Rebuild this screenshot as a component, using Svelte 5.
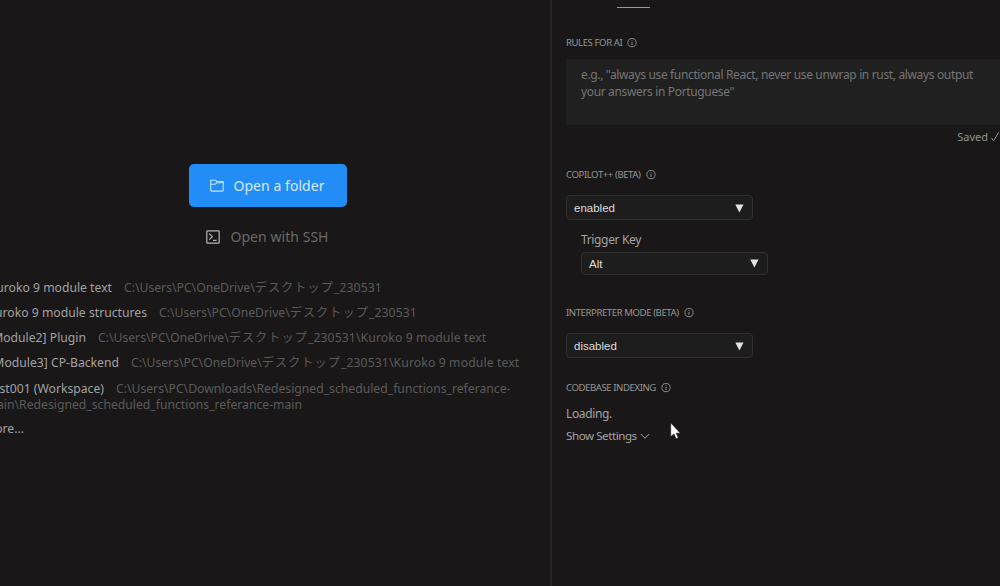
<script>
  const base = 'C:\\Users\\PC\\OneDrive\\';
  const recents = [
    { name: 'Kuroko 9 module text', width: 112, path: base, folder: 'デスクトップ', rest: '_230531' },
    { name: 'Kuroko 9 module structures', width: 147, path: base, folder: 'デスクトップ', rest: '_230531' },
    { name: '[Module2] Plugin', width: 86, path: base, folder: 'デスクトップ', rest: '_230531\\Kuroko 9 module text' },
    { name: '[Module3] CP-Backend', width: 119, path: base, folder: 'デスクトップ', rest: '_230531\\Kuroko 9 module text' },
    { name: 'test001 (Workspace)', width: 104, path: 'C:\\Users\\PC\\Downloads\\Redesigned_scheduled_functions_referance-', folder: '', rest: '' }
  ];
</script>

{#snippet heading(text)}
  <h2>
    <span>{text}</span>
    <svg width="10" height="10" viewBox="0 0 10 10" fill="none" stroke="currentColor">
      <circle cx="5" cy="4.6" r="4.1" stroke-width=".9" />
      <path d="M5 4v2.8M5 2.3v.9" stroke-width="1" />
    </svg>
  </h2>
{/snippet}

{#snippet select(value)}
  <div class="select">
    <span>{value}</span>
    <svg width="9" height="9" viewBox="0 0 9 9"><path d="M.3.4h8.2L4.4 8.6z" fill="#e2e2e2" /></svg>
  </div>
{/snippet}

<div class="window">
  <main>
    <div class="actions">
      <button class="primary">
        <svg width="14" height="13" viewBox="0 0 14 13" fill="none" stroke="#c5e1ff" stroke-width="1.1">
          <path d="M.7 11.3V1.2h4.7l1.3 1.3h6.5v8.8a.8.8 0 0 1-.8.8H1.5a.8.8 0 0 1-.8-.8z" />
          <path d="M.7 5.2h4.5l1.5-1.4h6.5" />
        </svg>
        <span>Open a folder</span>
      </button>
      <button class="ssh">
        <svg width="14" height="14" viewBox="0 0 14 14" fill="none" stroke="#b5b5b5" stroke-width="1.2">
          <rect x=".8" y=".8" width="12.4" height="12.4" rx=".8" />
          <path d="M3.3 3.7l3 3-3 3M7 10.3h3.6" />
        </svg>
        <span>Open with SSH</span>
      </button>
    </div>
    <div class="recents">
      {#each recents as r}
        <div class="row">
          <div class="name" style:width="{r.width}px"><span>{r.name}</span></div>
          <span class="path">{r.path}<span class="jp">{r.folder}</span><span class="rest">{r.rest}</span></span>
        </div>
      {/each}
      <div class="row wrapped">
        <div class="name path" style:width="302px"><span>main\Redesigned_scheduled_functions_referance-main</span></div>
      </div>
      <div class="row more"><div class="name" style:width="24px"><span>More...</span></div></div>
    </div>
  </main>

  <aside>
    <div class="tab"></div>
    <section class="rules">
      {@render heading('RULES FOR AI')}
      <div class="textarea"><div>e.g., "always use functional React, never use unwrap in rust, always output</div><div>your answers in Portuguese"</div></div>
      <div class="saved"><span>Saved</span>
        <svg width="9" height="11" viewBox="0 0 9 11" fill="none" stroke="currentColor"><path d="M.5 6l2 2.8L7.6.5" /></svg>
      </div>
    </section>
    <section class="copilot">
      {@render heading('COPILOT++ (BETA)')}
      {@render select('enabled')}
      <div class="nested">
        <div class="label">Trigger Key</div>
        {@render select('Alt')}
      </div>
    </section>
    <section class="interpreter">
      {@render heading('INTERPRETER MODE (BETA)')}
      {@render select('disabled')}
    </section>
    <section class="indexing">
      {@render heading('CODEBASE INDEXING')}
      <div class="loading">Loading.</div>
      <div class="show"><span>Show Settings</span>
        <svg width="10" height="7" viewBox="0 0 10 7" fill="none" stroke="currentColor"><path d="M.8 1l4.2 4.3L9.2 1" /></svg>
      </div>
    </section>
  </aside>
  <svg class="cursor" width="11" height="18" viewBox="0 0 11 18"><path d="M.7.8v14l3.2-2.9 2.2 4.9 2.3-1-2.2-4.6h4.2z" fill="#fff" stroke="#111" stroke-width=".6" /></svg>
</div>

<style>
  :global(body) { background: #191717; overflow: hidden; }
  .window {
    display: flex; position: relative; box-sizing: border-box;
    width: 1000px; height: 586px; overflow: hidden;
    background: #191717; color: #a4a4a4;
    font: 12px/16px "Noto Sans", "Noto Sans CJK JP", sans-serif;
    letter-spacing: -.35px;
    white-space: nowrap;
  }
  svg { flex: none; display: block; }
  main { width: 550px; flex: none; overflow: hidden; padding-top: 164px; box-sizing: border-box; }
  .actions { display: flex; flex-direction: column; align-items: center; width: 535px; }
  button { border: 0; padding: 0; background: none; display: flex; align-items: center; justify-content: center; font: 14px/20px "Noto Sans", sans-serif; letter-spacing: .05px; }
  .primary { width: 158px; height: 43px; border-radius: 5px; background: #228df6; color: #d7eaff; gap: 9px; }
  .ssh { height: 20px; margin-top: 20px; gap: 10px; color: #696969; }
  .recents { margin-top: 27.6px; font-size: 12.2px; letter-spacing: 0; }
  .row { display: flex; height: 25.3px; line-height: 25px; }
  .name { display: flex; justify-content: flex-end; overflow: hidden; flex: none; }
  .name:not(.path) { color: #a2a2a2; }
  .path { color: #5b5b5b; }
  .jp { letter-spacing: 1px; }
  .rest { letter-spacing: .12px; }
  .row > span.path { margin-left: 12px; }
  .wrapped { height: 16px; margin-top: -4px; line-height: 16px; }
  .more { margin-top: 3px; }
  aside { flex: 1; min-width: 0; border-left: 2px solid #272727; padding-left: 14px; }
  .tab { width: 33px; height: 1px; margin: 7px 0 0 51px; background: #999; }
  h2 { display: flex; align-items: center; gap: 5px; margin: 0; height: 12px; font-size: 9.6px; line-height: 12px; font-weight: 400; color: #969696; letter-spacing: -.43px; }
  .rules { margin-top: 29px; }
  .textarea { margin-top: 10px; height: 66px; box-sizing: border-box; padding: 7px 15px; background: #202020; color: #757575; line-height: 17px; }
  .saved { display: flex; justify-content: flex-end; align-items: center; gap: 3px; margin-top: 4px; font-size: 11px; letter-spacing: 0; color: #929292; }
  .copilot { margin-top: 24px; }
  .select { display: flex; align-items: center; justify-content: space-between; width: 187px; height: 24px; box-sizing: border-box; border: 1px solid #303030; border-radius: 4px; background: #1d1d1e; padding: 1px 8px 0 7px; font: 11.5px/20px "Liberation Sans", sans-serif; letter-spacing: 0; color: #dedede; }
  h2 + .select { margin-top: 14px; height: 25px; }
  .nested { padding-left: 15px; margin-top: 12px; }
  .label { margin-bottom: 4px; }
  .nested .select { height: 23px; padding-top: 0; }
  .interpreter { margin-top: 32px; }
  .indexing { margin-top: 24px; }
  .loading { margin-top: 12px; }
  .show { display: flex; align-items: center; gap: 3px; margin-top: 6px; font-size: 11.6px; letter-spacing: -.45px; }
  .cursor { position: absolute; left: 670px; top: 422px; }
</style>
